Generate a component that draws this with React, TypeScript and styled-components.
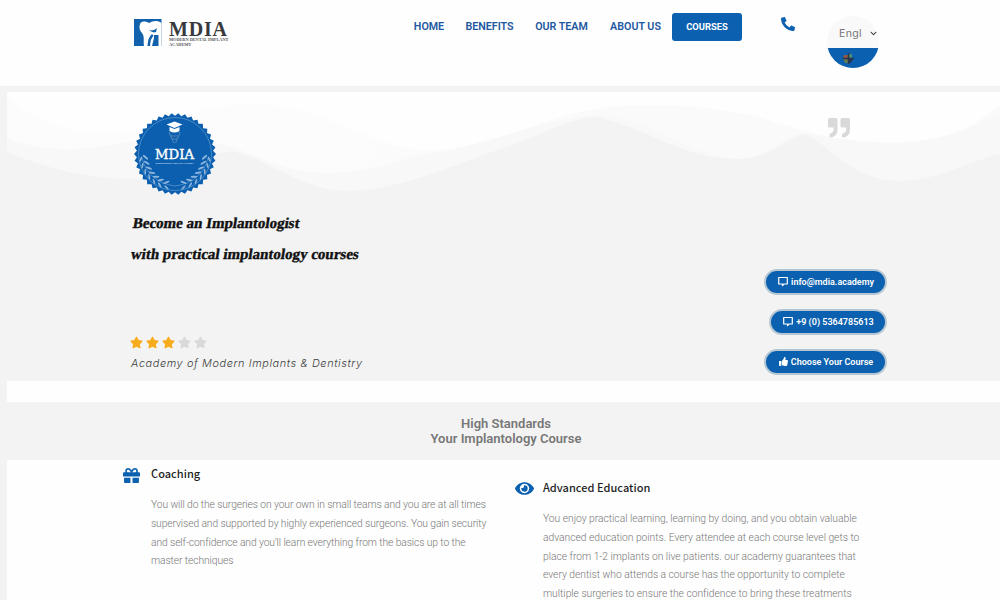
import React from 'react';
import styled, { createGlobalStyle } from 'styled-components';
import { FaPhoneAlt, FaGift, FaEye, FaThumbsUp, FaStar, FaChevronDown } from 'react-icons/fa';

const BLUE = '#0b61af';

const GlobalStyle = createGlobalStyle`
  * { box-sizing: border-box; }
  body { margin: 0; background: #f3f3f3; font-family: Roboto, "Liberation Sans", sans-serif; overflow: hidden; }
`;

const Page = styled.div`
  width: 1000px;
  height: 600px;
  overflow: hidden;
  display: flex;
  flex-direction: column;
`;

const Header = styled.header`
  height: 86px;
  flex: none;
  display: flex;
  align-items: flex-start;
  padding-left: 134px;
  background: #fefefe;
`;

const Brand = styled.div`
  display: flex;
  gap: 7px;
  width: 269px;
  padding-top: 19px;
`;

const BrandText = styled.div`
  display: flex;
  flex-direction: column;
  font-family: "Liberation Serif", serif;
  color: #37393d;
  white-space: nowrap;
`;

const BrandName = styled.div`
  font-size: 20px;
  font-weight: 700;
  line-height: 20px;
  height: 18px;
  letter-spacing: 0.8px;
`;

const BrandLine = styled.div`
  font-size: 4.3px;
  line-height: 5px;
  font-weight: 700;
  color: #55585c;
`;

const Nav = styled.nav`
  display: flex;
  align-items: center;
  padding-top: 12px;
`;

const NavLink = styled.a<{ $width: number }>`
  width: ${(p) => p.$width}px;
  text-align: center;
  font-size: 10.7px;
  font-weight: 600;
  line-height: 29px;
  color: #1c57a0;
  white-space: nowrap;
`;

const NavButton = styled.a`
  width: 70px;
  height: 28px;
  border-radius: 3px;
  background: ${BLUE};
  color: #fff;
  font-size: 9.4px;
  font-weight: 700;
  line-height: 27px;
  text-align: center;
`;

const Phone = styled.div`
  margin: 17px 0 0 39px;
  color: ${BLUE};
  font-size: 14px;
  line-height: 0;
`;

const Language = styled.div`
  width: 52px;
  height: 52px;
  margin: 16px 0 0 32px;
  border-radius: 50%;
  overflow: hidden;
  background: linear-gradient(#f9f9f9 0 32px, ${BLUE} 32px);
`;

const LanguageSelect = styled.div`
  height: 32px;
  display: flex;
  align-items: center;
  justify-content: space-between;
  padding: 2px 2px 0 12px;
  font-family: Inter, sans-serif;
  font-size: 10.6px;
  letter-spacing: 0.3px;
  color: #777;
  svg { color: #444; font-size: 7px; }
`;

const Flag = styled.div`
  padding-left: 16px;
  line-height: 0;
  padding-top: 5px;
`;

const Hero = styled.section`
  position: relative;
  height: 289px;
  flex: none;
  margin: 6px 0 0 7px;
  padding: 0 113px 0 123px;
  display: flex;
  justify-content: space-between;
`;

const Waves = styled.svg`
  position: absolute;
  inset: 0;
  z-index: -1;
`;

const HeroCopy = styled.div`
  display: flex;
  flex-direction: column;
  align-items: flex-start;
`;

const BadgeSlot = styled.div`
  height: 84px;
  margin: 20px 0 0 3px;
`;

const Headlines = styled.div`
  margin-top: 12px;
`;

const Headline = styled.h1<{ $indent: number }>`
  margin: 0 0 0 ${(p) => p.$indent}px;
  font-family: "Liberation Serif", serif;
  font-size: 15px;
  font-weight: 700;
  line-height: 31px;
  color: #111;
  -webkit-text-stroke: 0.35px #111;
  transform: skewX(-9deg);
  white-space: nowrap;
`;

const Stars = styled.div`
  display: flex;
  gap: 3px;
  margin-top: 66px;
`;

const Star = styled(FaStar)<{ $on: boolean }>`
  width: 13px;
  height: 13px;
  color: ${(p) => (p.$on ? '#f6ac1d' : '#d9d9d9')};
`;

const Tagline = styled.p`
  margin: 7px 0 0 1px;
  font-family: Inter, sans-serif;
  font-size: 10.9px;
  font-style: italic;
  font-weight: 300;
  line-height: 15px;
  letter-spacing: 0.6px;
  color: #3d3d3d;
  white-space: nowrap;
`;

const HeroActions = styled.div`
  display: flex;
  flex-direction: column;
  align-items: flex-end;
`;

const Quote = styled.div`
  height: 177px;
  flex: none;
  padding: 26px 36px 0 0;
  line-height: 0;
`;

const Pill = styled.a<{ $width: number }>`
  width: ${(p) => p.$width}px;
  height: 26px;
  flex: none;
  margin-bottom: 14px;
  padding: 0 0 1px 1px;
  border: 2px solid #b4c6d4;
  border-radius: 13px;
  background: ${BLUE};
  color: #fff;
  display: flex;
  align-items: center;
  justify-content: center;
  gap: 3px;
  font-size: 9px;
  font-weight: 600;
  white-space: nowrap;
  svg { flex: none; }
`;

const Spacer = styled.div`
  height: 21px;
  flex: none;
  margin-left: 7px;
  background: #fefefe;
`;

const Standards = styled.h2`
  height: 58px;
  flex: none;
  margin: 0;
  padding: 14px 0 0 12px;
  font-size: 13px;
  font-weight: 600;
  line-height: 15.4px;
  color: #777;
  text-align: center;
`;

const Features = styled.section`
  flex: 1;
  min-height: 0;
  display: flex;
  margin-left: 7px;
  padding-left: 116px;
  background: #fefefe;
`;

const Feature = styled.article<{ $top: number; $width: number }>`
  width: ${(p) => p.$width}px;
  flex: none;
  display: flex;
  padding-top: ${(p) => p.$top}px;
`;

const FeatureIcon = styled.div<{ $top: number }>`
  width: 28px;
  padding-top: ${(p) => p.$top}px;
  color: ${BLUE};
  line-height: 0;
`;

const FeatureTitle = styled.h3`
  margin: 0 0 15px;
  font-family: "Noto Sans CJK JP", sans-serif;
  font-size: 11px;
  font-weight: 500;
  line-height: 16px;
  letter-spacing: 0.03px;
  color: #1e1e1e;
`;

const FeatureText = styled.p<{ $spacing: number }>`
  margin: 0;
  font-size: 10.3px;
  font-weight: 300;
  line-height: 18.8px;
  letter-spacing: ${(p) => p.$spacing}px;
  color: #777;
  white-space: nowrap;
`;

const ToothMark = () => (
  <svg width="28" height="28" viewBox="0 0 28 28">
    <path d="M0 0H27.500V27H0Z" fill="#1261ac" />
    <path
      d="M6.500 4C8 2 12 2 15 4C19 2 23 1 27.500 4V16H20V19L18 27H10C9 22 11 18 8 14C5 11 5 7 6.500 4Z"
      fill="#fff"
    />
    <path d="M15 11Q20 12.500 23 9L22 13Q19 14.500 15 11Z" fill="#1261ac" />
    <path d="M13.500 27Q14 18 18 15L19.500 17Q16.500 19 16 27Z" fill="#1261ac" />
    <path d="M24.500 16H27.500V27H24.500Z" fill="#fff" />
  </svg>
);

const teeth = Array.from({ length: 76 }, (_, i) => {
  const angle = (i * Math.PI) / 38;
  const radius = i % 2 ? 41 : 38.2;
  return `${42 + radius * Math.sin(angle)},${42 - radius * Math.cos(angle)}`;
}).join(' ');

const leaves = [102, 113, 124, 135, 146, 157, 169];

const SealText = styled.text`
  font-family: "DejaVu Serif", serif;
  font-size: 13.6px;
  fill: #fff;
  stroke: #fff;
  stroke-width: 0.4px;
`;

const SealCaption = styled.text`
  font-family: "Liberation Sans", sans-serif;
  font-size: 2.4px;
  font-weight: 700;
  fill: #c9dcee;
`;

const Seal = () => (
  <svg width="84" height="84" viewBox="0 0 84 84">
    <polygon points={teeth} fill="#0b5fae" />
    <circle cx="42" cy="42" r="36.500" fill="none" stroke="#4d8dc8" strokeWidth="0.9" />
    <path d="M33.500 12.500L41.500 9.500L49.500 12.500L41.500 16Z M36.500 15L41.500 17L46.500 15V19Q41.500 22 36.500 19Z" fill="#fff" />
    <path d="M36 20Q37 24 41 31M47 20Q46 24 42.500 31M38 24H45M39 27H44" fill="none" stroke="#5f8bb9" strokeWidth="0.9" />
    <SealText x="41.500" y="46.500" textAnchor="middle" textLength="39" lengthAdjust="spacingAndGlyphs">MDIA</SealText>
    <SealCaption x="41.500" y="51.500" textAnchor="middle" textLength="38" lengthAdjust="spacingAndGlyphs">MODERN DENTAL IMPLANT ACADEMY</SealCaption>
    {[1, -1].map((side) => (
      <g key={side} transform={side === 1 ? undefined : 'translate(84 0) scale(-1 1)'}>
        <path d="M75 46Q69 70 42 74" fill="none" stroke="#6399cc" strokeWidth="0.7" />
        {leaves.map((deg) => (
          <g key={deg} transform={`rotate(${deg} 42 42)`} fill="#8db6de">
            <ellipse cx="39" cy="12.500" rx="3.400" ry="1" transform="rotate(35 39 12.500)" />
            <ellipse cx="40" cy="7.500" rx="3" ry="0.900" transform="rotate(-35 40 7.500)" />
          </g>
        ))}
      </g>
    ))}
  </svg>
);

const QuoteMark = () => (
  <svg width="23" height="20" viewBox="0 0 23 20">
    {[0, 12.5].map((x) => (
      <path
        key={x}
        transform={`translate(${x} 0)`}
        d="M1.500 0H8Q9.500 0 9.500 1.500V11Q9.500 19 2.500 19.500Q1.500 19.500 1.500 18.500V16.500Q1.500 15.800 2.500 15.600Q6 14.500 5.700 9.500H1.500Q0 9.500 0 8V1.500Q0 0 1.500 0Z"
        fill="#d9d9d9"
      />
    ))}
  </svg>
);

const Message = () => (
  <svg width="10" height="11" viewBox="0 0 10 11">
    <path d="M0.700 1.500H9.300V8H6L4.500 9.500V8H0.700Z" fill="none" stroke="#fff" strokeWidth="1.200" strokeLinejoin="round" />
  </svg>
);

const App = () => (
  <Page>
    <GlobalStyle />
    <Header>
      <Brand>
        <ToothMark />
        <BrandText>
          <BrandName>MDIA</BrandName>
          <BrandLine>MODERN DENTAL IMPLANT</BrandLine>
          <BrandLine>ACADEMY</BrandLine>
        </BrandText>
      </Brand>
      <Nav>
        <NavLink $width={52}>HOME</NavLink>
        <NavLink $width={69}>BENEFITS</NavLink>
        <NavLink $width={75}>OUR TEAM</NavLink>
        <NavLink $width={73}>ABOUT US</NavLink>
        <NavButton>COURSES</NavButton>
      </Nav>
      <Phone><FaPhoneAlt /></Phone>
      <Language>
        <LanguageSelect>Engl<FaChevronDown /></LanguageSelect>
        <Flag>
          <svg width="11" height="11" viewBox="0 0 11 11">
            <path d="M0 5H5V10H2Z" fill="#687b55" />
            <path d="M1 2H5V5H0Z" fill="#965849" />
            <path d="M6 1H9V5H6Z" fill="#438f7a" />
            <path d="M6 6H10L8 10H6Z" fill="#24345f" />
            <path d="M5.500 0V11M0 5.500H11" stroke="#273449" strokeWidth="1.500" />
          </svg>
        </Flag>
      </Language>
    </Header>
    <Hero>
      <Waves width="993" height="289" viewBox="7 92 993 289">
        <defs>
          <linearGradient id="crest" x1="0" x2="1" y1="0" y2="0">
            <stop offset="0.3" stopColor="#fcfcfc" />
            <stop offset="0.6" stopColor="#fafafa" />
          </linearGradient>
        </defs>
        <path d="M7 92H1000V381H7Z" fill="#fefefe" />
        <path d="M7 98C45 128 85 138 130 132C175 120 205 104 250 104C330 105 370 150 430 150C490 150 560 108 620 106C660 103 710 106 750 115C800 128 820 141 890 142C950 142 975 126 1000 104V381H7Z" fill="url(#crest)" />
        <path d="M7 138C60 158 100 146 140 140C190 134 220 140 265 160C320 184 370 170 415 156C480 148 540 120 595 115C660 120 690 157 738 159C765 159 785 135 803 133C830 139 860 143 900 143C950 140 970 128 1000 114V381H7Z" fill="#f8f8f8" />
        <path d="M7 152C55 172 105 182 150 178C190 170 210 150 235 152C270 160 300 190 345 191C400 190 440 170 500 149C540 137 565 119 595 117C640 124 680 159 738 159C770 159 785 138 805 134C830 145 850 180 900 181C940 180 965 162 1000 154V381H7Z" fill="#f3f3f3" />
      </Waves>
      <HeroCopy>
        <BadgeSlot><Seal /></BadgeSlot>
        <Headlines>
          <Headline $indent={3}>Become an Implantologist</Headline>
          <Headline $indent={1}>with practical implantology courses</Headline>
        </Headlines>
        <Stars>
          {[true, true, true, false, false].map((on, i) => <Star key={i} $on={on} />)}
        </Stars>
        <Tagline>Academy of Modern Implants &amp; Dentistry</Tagline>
      </HeroCopy>
      <HeroActions>
        <Quote><QuoteMark /></Quote>
        <Pill $width={123}><Message />info@mdia.academy</Pill>
        <Pill $width={118}><Message />+9 (0) 5364785613</Pill>
        <Pill $width={123}><FaThumbsUp size={9} />Choose Your Course</Pill>
      </HeroActions>
    </Hero>
    <Spacer />
    <Standards>High Standards<br />Your Implantology Course</Standards>
    <Features>
      <Feature $top={5} $width={392}>
        <FeatureIcon $top={2}><FaGift size={17} /></FeatureIcon>
        <div>
          <FeatureTitle>Coaching</FeatureTitle>
          <FeatureText $spacing={-0.1}>
            You will do the surgeries on your own in small teams and you are at all times<br />
            supervised and supported by highly experienced surgeons. You gain security<br />
            and self-confidence and you'll learn everything from the basics up to the<br />
            master techniques
          </FeatureText>
        </div>
      </Feature>
      <Feature $top={19} $width={400}>
        <FeatureIcon $top={0}><FaEye size={19} /></FeatureIcon>
        <div>
          <FeatureTitle>Advanced Education</FeatureTitle>
          <FeatureText $spacing={-0.02}>
            You enjoy practical learning, learning by doing, and you obtain valuable<br />
            advanced education points. Every attendee at each course level gets to<br />
            place from 1-2 implants on live patients. our academy guarantees that<br />
            every dentist who attends a course has the opportunity to complete<br />
            multiple surgeries to ensure the confidence to bring these treatments
          </FeatureText>
        </div>
      </Feature>
    </Features>
  </Page>
);

export default App;
